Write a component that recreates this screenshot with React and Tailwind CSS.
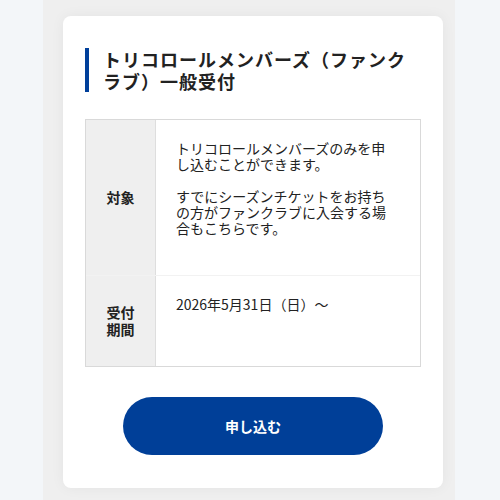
export default function App() {
  const font = { fontFamily: '"Noto Sans CJK JP", "Noto Sans", sans-serif' }

  return (
    <div className="min-h-[500px] w-[500px] bg-[#f3f6f9] flex" style={font}>
      <div className="ml-[43px] w-[412px] bg-[#efefef] pt-4 pl-5 pr-3 pb-[13px]">
        <div className="w-[380px] bg-white rounded-lg shadow-[0_0_14px_rgba(0,0,0,0.05)] px-[22px] pt-8 pb-[33px]">
          <div className="flex gap-[14px]">
            <div className="w-1 bg-[#003f9a] shrink-0" />
            <h2 className="text-[18px] leading-[22px] font-bold text-[#222] tracking-[1px]">
              トリコロールメンバーズ（ファンクラブ）一般受付
            </h2>
          </div>

          <div className="mt-[27px] border border-[#d9d9d9] text-[#222] text-[14px]">
            <div className="flex h-[156px] border-b border-[#f2f2f2]">
              <div className="w-[70px] shrink-0 bg-[#efefef] border-r border-[#dedede] flex items-center justify-center font-bold leading-[17px]">
                対象
              </div>
              <div className="flex-1 pl-5 pr-[30px] pt-5 leading-[16px]">
                <p>トリコロールメンバーズのみを申し込むことができます。</p>
                <p className="mt-4">すでにシーズンチケットをお持ちの方がファンクラブに入会する場合もこちらです。</p>
              </div>
            </div>
            <div className="flex h-[90px]">
              <div className="w-[70px] shrink-0 bg-[#efefef] border-r border-[#dedede] flex flex-col items-center justify-center font-bold leading-[17px]">
                <span>受付</span>
                <span>期間</span>
              </div>
              <div className="flex-1 pl-5 pr-[30px] pt-5 leading-[16px]">
                2026年5月31日（日）～
              </div>
            </div>
          </div>

          <div className="mt-[30px] flex justify-center">
            <button className="w-[260px] h-[58px] rounded-full bg-[#003f98] text-white text-[14px] font-bold">
              申し込む
            </button>
          </div>
        </div>
      </div>
    </div>
  )
}
